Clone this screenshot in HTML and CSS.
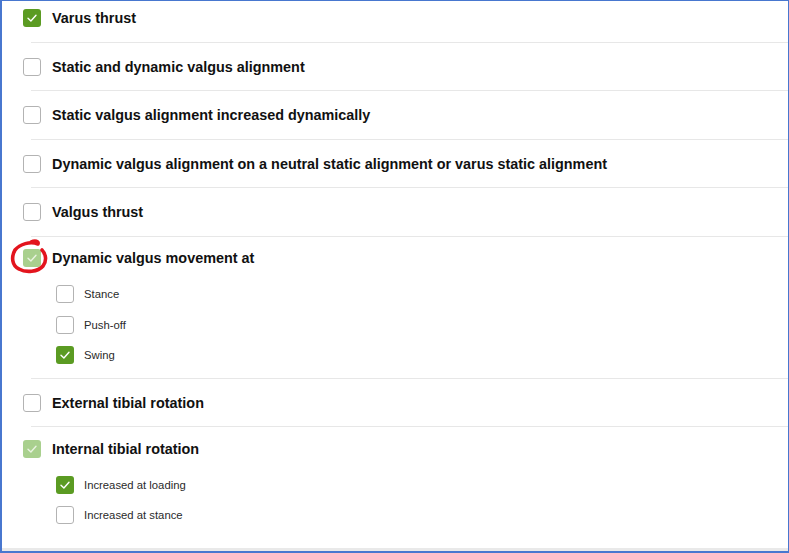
FILE: index.html
```html
<!DOCTYPE html>
<html lang="en">
<head>
<meta charset="utf-8">
<title>Gait observations</title>
<link rel="stylesheet" href="styles.css">
</head>
<body>
<div class="frame">
  <div class="viewport">
    <ul class="list">
      <li class="item">
        <div class="row"><span class="cb checked"><svg viewBox="0 0 18 18"><path d="M5 9.2 L7.9 12 L13 6.3"/></svg></span><span class="label">Varus thrust</span></div>
      </li>
      <li class="item">
        <div class="row"><span class="cb"></span><span class="label">Static and dynamic valgus alignment</span></div>
      </li>
      <li class="item">
        <div class="row"><span class="cb"></span><span class="label">Static valgus alignment increased dynamically</span></div>
      </li>
      <li class="item">
        <div class="row"><span class="cb"></span><span class="label">Dynamic valgus alignment on a neutral static alignment or varus static alignment</span></div>
      </li>
      <li class="item">
        <div class="row"><span class="cb"></span><span class="label">Valgus thrust</span></div>
      </li>
      <li class="item parent">
        <div class="row">
          <span class="cb partial"><svg viewBox="0 0 18 18"><path d="M5 9.2 L7.9 12 L13 6.3"/></svg></span><span class="label">Dynamic valgus movement at</span>
          <svg class="mark" viewBox="0 0 40 38"><path d="M21 4 C25 2 29 3 28 6 C20 3 10 6 5 12 C1 19 2 28 9 31 C16 35 28 34 33 28 C37 23 36 16 32 12"/></svg>
        </div>
        <ul class="sublist">
          <li class="subrow"><span class="cb"></span><span class="sublabel">Stance</span></li>
          <li class="subrow"><span class="cb"></span><span class="sublabel">Push-off</span></li>
          <li class="subrow"><span class="cb checked"><svg viewBox="0 0 18 18"><path d="M5 9.2 L7.9 12 L13 6.3"/></svg></span><span class="sublabel">Swing</span></li>
        </ul>
      </li>
      <li class="item">
        <div class="row"><span class="cb"></span><span class="label">External tibial rotation</span></div>
      </li>
      <li class="item parent last">
        <div class="row"><span class="cb partial"><svg viewBox="0 0 18 18"><path d="M5 9.2 L7.9 12 L13 6.3"/></svg></span><span class="label">Internal tibial rotation</span></div>
        <ul class="sublist">
          <li class="subrow"><span class="cb checked"><svg viewBox="0 0 18 18"><path d="M5 9.2 L7.9 12 L13 6.3"/></svg></span><span class="sublabel">Increased at loading</span></li>
          <li class="subrow"><span class="cb"></span><span class="sublabel">Increased at stance</span></li>
        </ul>
      </li>
    </ul>
  </div>
  <div class="hscroll"></div>
</div>
</body>
</html>
```

FILE: styles.css
```css
* { box-sizing: border-box; }

html, body {
  margin: 0;
  padding: 0;
  background: #ffffff;
}

body {
  font-family: "Liberation Sans", Arial, sans-serif;
  color: #1b1b1b;
}

.frame {
  width: 789px;
  height: 553px;
  border-style: solid;
  border-color: #4877cf;
  border-width: 1px 1px 2px 2px;
  display: flex;
  flex-direction: column;
  background: #ffffff;
}

.viewport {
  flex: 1;
  overflow: hidden;
}

.hscroll {
  height: 3px;
  background: #e9e9e9;
}

.list, .sublist {
  list-style: none;
  margin: 0;
  padding: 0;
}

.list {
  margin-top: -6.75px;
}

.item::after {
  content: "";
  display: block;
  height: 1px;
  margin-left: 29px;
  background: #e7e7e7;
}

.item.last::after {
  display: none;
}

.row {
  position: relative;
  display: flex;
  align-items: center;
  gap: 11px;
  padding: 14.75px 0 14.75px 21px;
}

.parent .row {
  padding-top: 12.5px;
  padding-bottom: 11.5px;
}

.label {
  font-size: 14.4px;
  font-weight: 700;
  line-height: 18px;
  color: #111111;
}

.sublist {
  padding: 0 0 7.5px 54px;
}

.subrow {
  height: 30.5px;
  display: flex;
  align-items: center;
  gap: 10px;
}

.sublabel {
  font-size: 11.3px;
  line-height: 16px;
  color: #2a2a2a;
}

.cb {
  flex: none;
  width: 18px;
  height: 18px;
  border: 1.5px solid #b3b3b3;
  border-radius: 3px;
  background: #ffffff;
  display: flex;
  align-items: center;
  justify-content: center;
}

.cb svg {
  width: 18px;
  height: 18px;
  flex: none;
}

.cb svg path {
  fill: none;
  stroke: #ffffff;
  stroke-width: 1.4;
  stroke-linecap: round;
  stroke-linejoin: round;
}

.cb.checked {
  border: none;
  background: #5b9b22;
}

.cb.partial {
  border: none;
  background: #a9d08e;
}

.cb.partial svg path {
  stroke: #e9f3e1;
}

.mark {
  position: absolute;
  left: 8px;
  top: 1px;
  width: 40px;
  height: 38px;
  overflow: visible;
}

.mark path {
  fill: none;
  stroke: #e3141d;
  stroke-width: 3.6;
  stroke-linecap: round;
  stroke-linejoin: round;
}
```
